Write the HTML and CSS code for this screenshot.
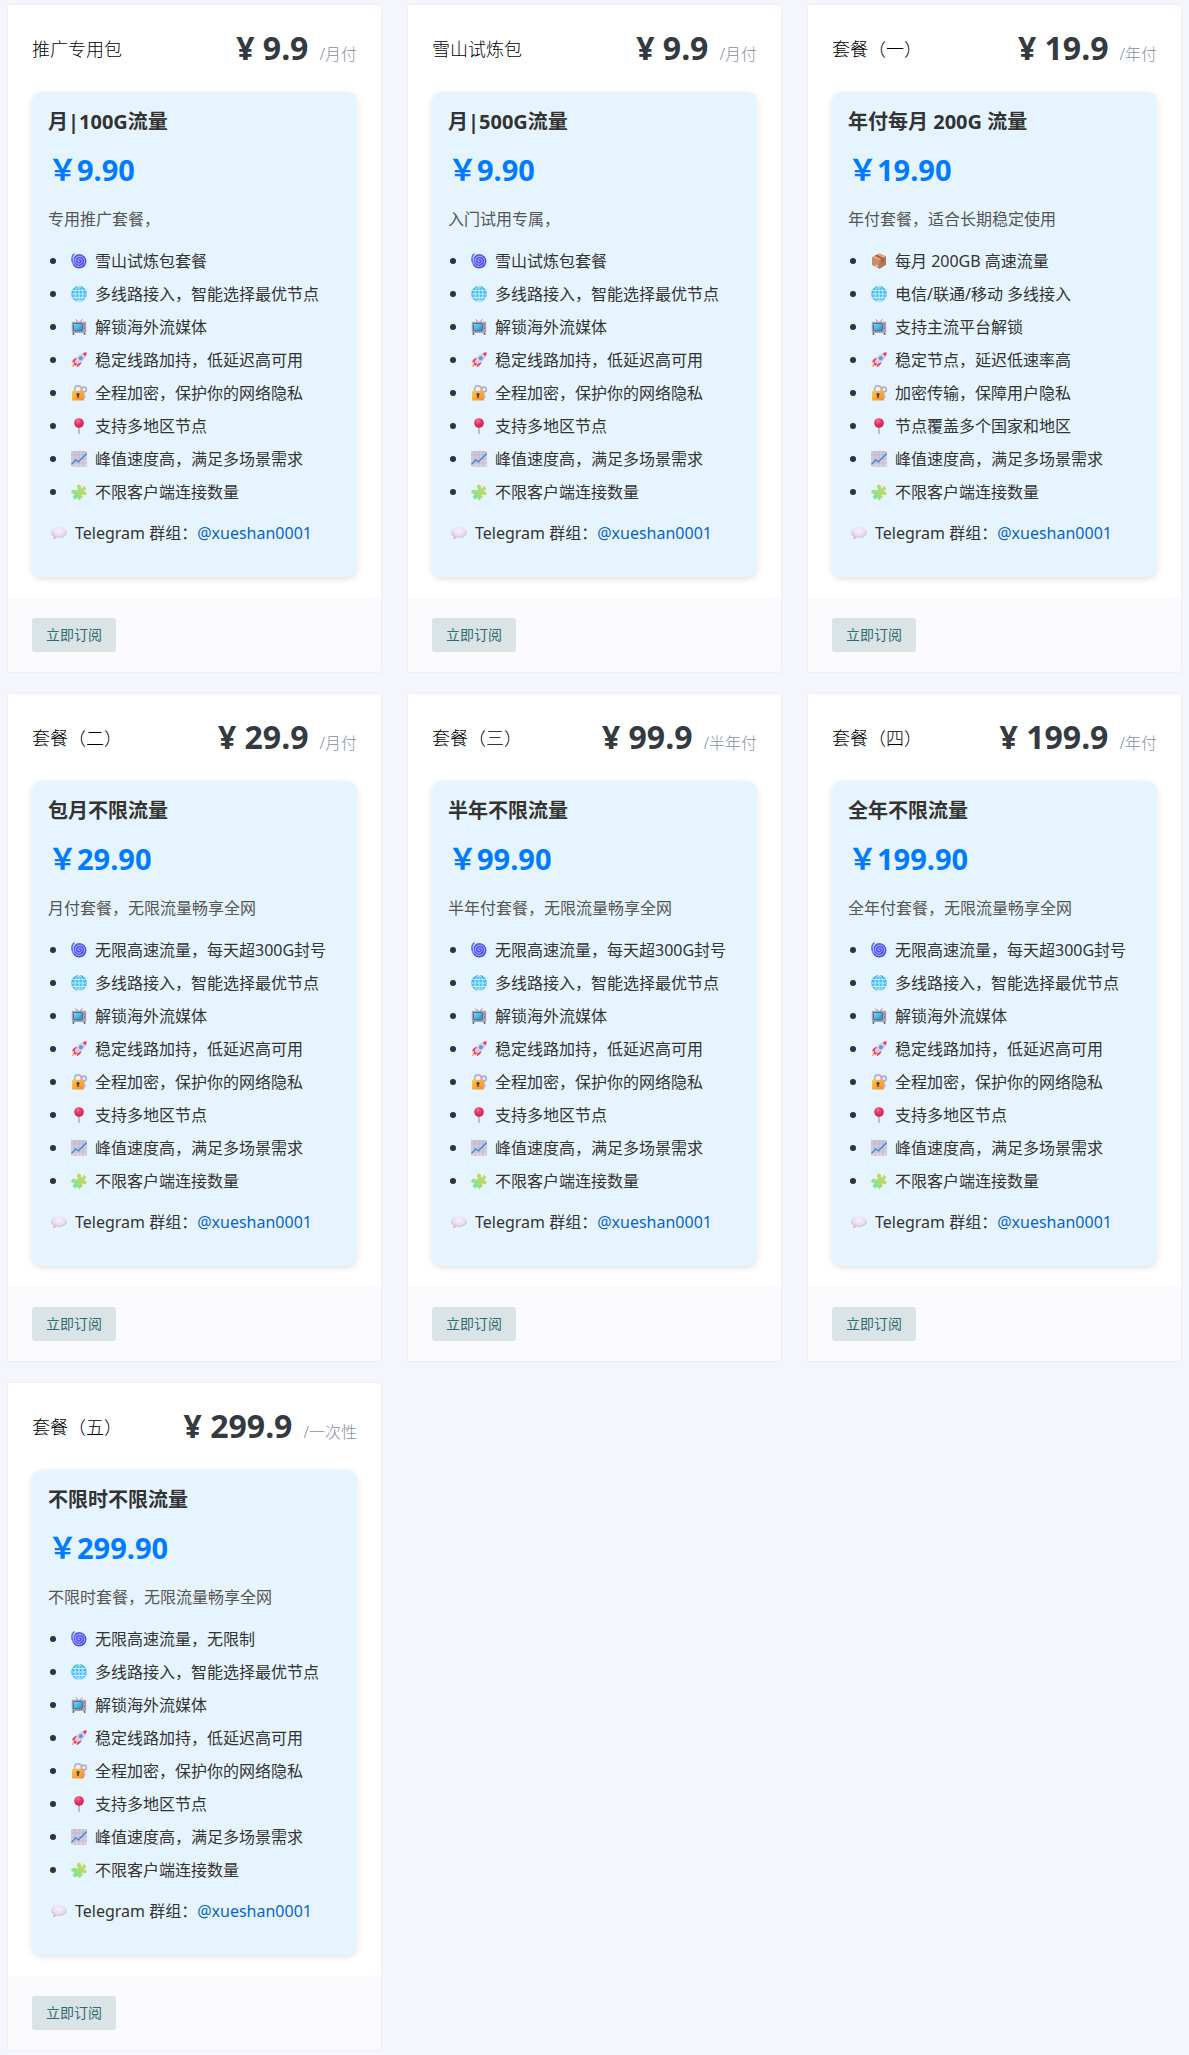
FILE: index.html
```
<!DOCTYPE html>
<html lang="zh-CN">
<head>
<meta charset="utf-8">
<meta name="viewport" content="width=device-width, initial-scale=1">
<title>套餐</title>
<link rel="stylesheet" href="styles.css">
</head>
<body>
<svg class="sprite" aria-hidden="true">
  <defs>
    <linearGradient id="g-spiral" x1="0" y1="0" x2="1" y2="1"><stop offset="0" stop-color="#5a6cff"/><stop offset="1" stop-color="#4a3be6"/></linearGradient>
    <linearGradient id="g-globe" x1="0" y1="0" x2="0" y2="1"><stop offset="0" stop-color="#35b4f2"/><stop offset="1" stop-color="#62c8f8"/></linearGradient>
    <linearGradient id="g-screen" x1="0" y1="0" x2="1" y2="1"><stop offset="0" stop-color="#6fe0ff"/><stop offset="1" stop-color="#1f90d0"/></linearGradient>
    <linearGradient id="g-lock" x1="0" y1="0" x2="1" y2="1"><stop offset="0" stop-color="#ffc83a"/><stop offset="1" stop-color="#f78a35"/></linearGradient>
    <radialGradient id="g-pin" cx=".4" cy=".3" r=".7"><stop offset="0" stop-color="#ff7a9c"/><stop offset=".4" stop-color="#f0386b"/><stop offset="1" stop-color="#cf1c50"/></radialGradient>
    <linearGradient id="g-chart" x1="0" y1="0" x2="0" y2="1"><stop offset="0" stop-color="#cdc5dc"/><stop offset="1" stop-color="#ddd3e6"/></linearGradient>
    <linearGradient id="g-puzzle" x1="1" y1="0" x2="0" y2="1"><stop offset="0" stop-color="#d8d850"/><stop offset="1" stop-color="#6fe79a"/></linearGradient>
    <radialGradient id="g-bubble" cx=".5" cy=".3" r=".7"><stop offset="0" stop-color="#f7f1fa"/><stop offset=".6" stop-color="#e6daf0"/><stop offset="1" stop-color="#bda6d6"/></radialGradient>
  </defs>
  <symbol id="i-spiral" viewBox="0 0 16 16">
    <circle cx="8.2" cy="8.3" r="7.2" fill="url(#g-spiral)"/>
    <path d="M1.2 9C.2 5 1.400 2 3.500.6" fill="none" stroke="#5a6cff" stroke-width="1.300"/>
    <path d="M3.400 3C1.500 6 2 11 5.600 12.800 9.500 14.700 14 12 13.500 7.500 13 3.800 9 2.400 6.300 4 3.700 5.600 3.800 9.400 6.300 10.700 8.800 12 11.400 10 11 7.600 10.600 5.400 7.800 5.200 7 7c-.5 1.300.8 2.200 1.700 1.600" fill="none" stroke="#cfd4ff" stroke-width=".8" stroke-linecap="round"/>
  </symbol>
  <symbol id="i-globe" viewBox="0 0 16 16">
    <circle cx="8" cy="8" r="7.900" fill="url(#g-globe)"/>
    <g fill="none" stroke="#d3f1ff" stroke-width=".9"><path d="M8 .5v15M.5 8h15M1.500 4.500h13M1.500 11.500h13"/><ellipse cx="8" cy="8" rx="3.900" ry="7.500"/></g>
  </symbol>
  <symbol id="i-tv" viewBox="0 0 16 16">
    <path d="M4.500 .3l3 3.200M11.500 .3l-3 3.200" stroke="#8b8598" stroke-width=".9"/>
    <path d="M3 13l-.7 2.300M13 13l.7 2.300" stroke="#5f5870" stroke-width="1.500" stroke-linecap="round"/>
    <rect x=".8" y="2.800" width="14.400" height="11.200" rx="1.200" fill="#a99fb5"/>
    <rect x="2.500" y="4.500" width="8.800" height="7.300" rx=".8" fill="url(#g-screen)" stroke="#4c5870" stroke-width=".8"/>
    <circle cx="13.400" cy="6" r=".8" fill="#e5486c"/><circle cx="13.400" cy="9" r=".7" fill="#776d86"/>
  </symbol>
  <symbol id="i-rocket" viewBox="0 0 16 16">
    <path d="M3.500 10.200L.4 15.600l5.800-3z" fill="#ff9d3c"/>
    <path d="M6.500 5.500C3.800 5.600 1.800 7.500.8 10.400l4-1zM10.500 9.500c-.1 2.700-2 4.700-4.900 5.700l1-4z" fill="#f0386b"/>
    <path d="M3.600 10.200C5 5.800 8.300 1.800 13 1l2 2c-.8 4.700-4.800 8-9.200 9.400z" fill="#d8cde3"/>
    <path d="M11.600 1.400C13 .7 14.800.3 15.700.3c0 .9-.4 2.700-1.100 4.100z" fill="#ef3566"/>
    <path d="M3.300 9.800l2.900 2.900-1.700.8-2-2z" fill="#e33467"/>
    <circle cx="9.800" cy="6.200" r="1.700" fill="#32a5e3" stroke="#8f86a5" stroke-width=".6"/>
  </symbol>
  <symbol id="i-lock" viewBox="0 0 16 16">
    <circle cx="13" cy="4.500" r="2.400" fill="none" stroke="#b6a9c8" stroke-width="1.600"/>
    <path d="M13 7v7M13 11.500h2" stroke="#c5b9d3" stroke-width="1.700"/>
    <path d="M3.700 7V4.200a3.300 3.300 0 0 1 6.600 0V7" fill="none" stroke="#b8aec5" stroke-width="1.600"/>
    <rect x="1" y="5.800" width="11.800" height="9.800" rx="1.200" fill="url(#g-lock)"/>
    <path d="M7 8a1.500 1.500 0 0 1 .8 2.800V13H6.200v-2.200A1.500 1.500 0 0 1 7 8z" fill="#493b4b"/>
  </symbol>
  <symbol id="i-pin" viewBox="0 0 16 16">
    <path d="M7.400 8h1.200v7.500a.6.6 0 0 1-1.200 0z" fill="#9e94ab"/><circle cx="8" cy="5" r="4.800" fill="url(#g-pin)"/>
  </symbol>
  <symbol id="i-chart" viewBox="0 0 16 16">
    <rect width="16" height="16" rx="1" fill="url(#g-chart)"/>
    <path d="M4 0v16M8 0v16M12 0v16M0 4h16M0 8h16M0 12h16" stroke="#b8aecb" stroke-width=".6"/>
    <path d="M.5 13.500L4.500 9l3 1.800L15.700 2.500" fill="none" stroke="#3c8fd2" stroke-width="1.400"/>
  </symbol>
  <symbol id="i-puzzle" viewBox="0 0 16 16">
    <g fill="url(#g-puzzle)">
      <path d="M3.200 5.800l3 .6c.8.100 1-.7.500-1.300C5.300 3.200 6 .6 8 .5c1.700 0 2.400 1.700 1.900 3.200-.2.800.4 1.200 1 .7L12.800 1.800l2.800 2.700-2.400 2.200c-.5.600-.2 1.200.5 1.100 1.500-.2 2 1 1.700 2.100-.4 1.500-2.400 1.600-3.600.8-.8-.4-1.300.1-1 .8l1.400 1.400-2 1.300c-.7.500-.6.700-.9 1.300-.6.900-1.700.7-1.900-.3-.2-1.200-.9-1.700-1.600-1L3.900 15.500 1.500 13l1.600-2c.5-.7.100-1.300-.7-1.200C.8 10 .1 9 .3 7.700c.2-1.300 1.400-1.700 2.900-1.900z"/>
    </g>
  </symbol>
  <symbol id="i-box" viewBox="0 0 16 16">
    <path d="M1 4.200L8.600.4 15 3.600v8.200L8.300 15.800 1 12z" fill="#c98c68"/>
    <path d="M1 4.200L8.600.4 15 3.600 8.300 7.600z" fill="#dfa576"/><path d="M8.300 7.600L15 3.600v8.200l-6.700 4z" fill="#b3745b"/>
    <path d="M4 2.700l7 3.500v3.200l1.400-.8V5.200L5.800 1.800z" fill="#8d5a45"/><path d="M4.500 11.500l2 1v1.800l-2-1z" fill="#f3e2da"/>
  </symbol>
  <symbol id="i-bubble" viewBox="0 0 16 16">
    <path d="M8 2.200c4.500 0 7.900 2.200 7.900 5.300S12.500 12.800 8 12.800c-.9 0-1.700-.1-2.500-.2-.8.900-2 1.500-3.500 1.600.6-.7.900-1.600.8-2.600C1.100 10.600.1 9.200.1 7.500.1 4.400 3.500 2.200 8 2.200z" fill="url(#g-bubble)"/>
  </symbol>
</svg>

<main class="plans">
  <article class="card">
    <header class="card-head"><h2 class="name">推广专用包</h2><p class="price">¥ 9.9<span class="period">/月付</span></p></header>
    <section class="offer">
      <h3 class="offer-title">月|100G流量</h3>
      <p class="amount">￥9.90</p>
      <p class="desc">专用推广套餐，</p>
      <ul class="features">
        <li><svg class="icon"><use href="#i-spiral"/></svg>雪山试炼包套餐</li>
        <li><svg class="icon"><use href="#i-globe"/></svg>多线路接入，智能选择最优节点</li>
        <li><svg class="icon"><use href="#i-tv"/></svg>解锁海外流媒体</li>
        <li><svg class="icon"><use href="#i-rocket"/></svg>稳定线路加持，低延迟高可用</li>
        <li><svg class="icon"><use href="#i-lock"/></svg>全程加密，保护你的网络隐私</li>
        <li><svg class="icon"><use href="#i-pin"/></svg>支持多地区节点</li>
        <li><svg class="icon"><use href="#i-chart"/></svg>峰值速度高，满足多场景需求</li>
        <li><svg class="icon"><use href="#i-puzzle"/></svg>不限客户端连接数量</li>
      </ul>
      <p class="contact"><svg class="icon"><use href="#i-bubble"/></svg><span>Telegram 群组：<a href="#telegram">@xueshan0001</a></span></p>
    </section>
    <footer class="card-foot"><button class="subscribe" type="button">立即订阅</button></footer>
  </article>

  <article class="card">
    <header class="card-head"><h2 class="name">雪山试炼包</h2><p class="price">¥ 9.9<span class="period">/月付</span></p></header>
    <section class="offer">
      <h3 class="offer-title">月|500G流量</h3>
      <p class="amount">￥9.90</p>
      <p class="desc">入门试用专属，</p>
      <ul class="features">
        <li><svg class="icon"><use href="#i-spiral"/></svg>雪山试炼包套餐</li>
        <li><svg class="icon"><use href="#i-globe"/></svg>多线路接入，智能选择最优节点</li>
        <li><svg class="icon"><use href="#i-tv"/></svg>解锁海外流媒体</li>
        <li><svg class="icon"><use href="#i-rocket"/></svg>稳定线路加持，低延迟高可用</li>
        <li><svg class="icon"><use href="#i-lock"/></svg>全程加密，保护你的网络隐私</li>
        <li><svg class="icon"><use href="#i-pin"/></svg>支持多地区节点</li>
        <li><svg class="icon"><use href="#i-chart"/></svg>峰值速度高，满足多场景需求</li>
        <li><svg class="icon"><use href="#i-puzzle"/></svg>不限客户端连接数量</li>
      </ul>
      <p class="contact"><svg class="icon"><use href="#i-bubble"/></svg><span>Telegram 群组：<a href="#telegram">@xueshan0001</a></span></p>
    </section>
    <footer class="card-foot"><button class="subscribe" type="button">立即订阅</button></footer>
  </article>

  <article class="card">
    <header class="card-head"><h2 class="name">套餐（一）</h2><p class="price">¥ 19.9<span class="period">/年付</span></p></header>
    <section class="offer">
      <h3 class="offer-title">年付每月 200G 流量</h3>
      <p class="amount">￥19.90</p>
      <p class="desc">年付套餐，适合长期稳定使用</p>
      <ul class="features">
        <li><svg class="icon"><use href="#i-box"/></svg>每月 200GB 高速流量</li>
        <li><svg class="icon"><use href="#i-globe"/></svg>电信/联通/移动 多线接入</li>
        <li><svg class="icon"><use href="#i-tv"/></svg>支持主流平台解锁</li>
        <li><svg class="icon"><use href="#i-rocket"/></svg>稳定节点，延迟低速率高</li>
        <li><svg class="icon"><use href="#i-lock"/></svg>加密传输，保障用户隐私</li>
        <li><svg class="icon"><use href="#i-pin"/></svg>节点覆盖多个国家和地区</li>
        <li><svg class="icon"><use href="#i-chart"/></svg>峰值速度高，满足多场景需求</li>
        <li><svg class="icon"><use href="#i-puzzle"/></svg>不限客户端连接数量</li>
      </ul>
      <p class="contact"><svg class="icon"><use href="#i-bubble"/></svg><span>Telegram 群组：<a href="#telegram">@xueshan0001</a></span></p>
    </section>
    <footer class="card-foot"><button class="subscribe" type="button">立即订阅</button></footer>
  </article>

  <article class="card">
    <header class="card-head"><h2 class="name">套餐（二）</h2><p class="price">¥ 29.9<span class="period">/月付</span></p></header>
    <section class="offer">
      <h3 class="offer-title">包月不限流量</h3>
      <p class="amount">￥29.90</p>
      <p class="desc">月付套餐，无限流量畅享全网</p>
      <ul class="features">
        <li><svg class="icon"><use href="#i-spiral"/></svg>无限高速流量，每天超300G封号</li>
        <li><svg class="icon"><use href="#i-globe"/></svg>多线路接入，智能选择最优节点</li>
        <li><svg class="icon"><use href="#i-tv"/></svg>解锁海外流媒体</li>
        <li><svg class="icon"><use href="#i-rocket"/></svg>稳定线路加持，低延迟高可用</li>
        <li><svg class="icon"><use href="#i-lock"/></svg>全程加密，保护你的网络隐私</li>
        <li><svg class="icon"><use href="#i-pin"/></svg>支持多地区节点</li>
        <li><svg class="icon"><use href="#i-chart"/></svg>峰值速度高，满足多场景需求</li>
        <li><svg class="icon"><use href="#i-puzzle"/></svg>不限客户端连接数量</li>
      </ul>
      <p class="contact"><svg class="icon"><use href="#i-bubble"/></svg><span>Telegram 群组：<a href="#telegram">@xueshan0001</a></span></p>
    </section>
    <footer class="card-foot"><button class="subscribe" type="button">立即订阅</button></footer>
  </article>

  <article class="card">
    <header class="card-head"><h2 class="name">套餐（三）</h2><p class="price">¥ 99.9<span class="period">/半年付</span></p></header>
    <section class="offer">
      <h3 class="offer-title">半年不限流量</h3>
      <p class="amount">￥99.90</p>
      <p class="desc">半年付套餐，无限流量畅享全网</p>
      <ul class="features">
        <li><svg class="icon"><use href="#i-spiral"/></svg>无限高速流量，每天超300G封号</li>
        <li><svg class="icon"><use href="#i-globe"/></svg>多线路接入，智能选择最优节点</li>
        <li><svg class="icon"><use href="#i-tv"/></svg>解锁海外流媒体</li>
        <li><svg class="icon"><use href="#i-rocket"/></svg>稳定线路加持，低延迟高可用</li>
        <li><svg class="icon"><use href="#i-lock"/></svg>全程加密，保护你的网络隐私</li>
        <li><svg class="icon"><use href="#i-pin"/></svg>支持多地区节点</li>
        <li><svg class="icon"><use href="#i-chart"/></svg>峰值速度高，满足多场景需求</li>
        <li><svg class="icon"><use href="#i-puzzle"/></svg>不限客户端连接数量</li>
      </ul>
      <p class="contact"><svg class="icon"><use href="#i-bubble"/></svg><span>Telegram 群组：<a href="#telegram">@xueshan0001</a></span></p>
    </section>
    <footer class="card-foot"><button class="subscribe" type="button">立即订阅</button></footer>
  </article>

  <article class="card">
    <header class="card-head"><h2 class="name">套餐（四）</h2><p class="price">¥ 199.9<span class="period">/年付</span></p></header>
    <section class="offer">
      <h3 class="offer-title">全年不限流量</h3>
      <p class="amount">￥199.90</p>
      <p class="desc">全年付套餐，无限流量畅享全网</p>
      <ul class="features">
        <li><svg class="icon"><use href="#i-spiral"/></svg>无限高速流量，每天超300G封号</li>
        <li><svg class="icon"><use href="#i-globe"/></svg>多线路接入，智能选择最优节点</li>
        <li><svg class="icon"><use href="#i-tv"/></svg>解锁海外流媒体</li>
        <li><svg class="icon"><use href="#i-rocket"/></svg>稳定线路加持，低延迟高可用</li>
        <li><svg class="icon"><use href="#i-lock"/></svg>全程加密，保护你的网络隐私</li>
        <li><svg class="icon"><use href="#i-pin"/></svg>支持多地区节点</li>
        <li><svg class="icon"><use href="#i-chart"/></svg>峰值速度高，满足多场景需求</li>
        <li><svg class="icon"><use href="#i-puzzle"/></svg>不限客户端连接数量</li>
      </ul>
      <p class="contact"><svg class="icon"><use href="#i-bubble"/></svg><span>Telegram 群组：<a href="#telegram">@xueshan0001</a></span></p>
    </section>
    <footer class="card-foot"><button class="subscribe" type="button">立即订阅</button></footer>
  </article>

  <article class="card">
    <header class="card-head"><h2 class="name">套餐（五）</h2><p class="price">¥ 299.9<span class="period">/一次性</span></p></header>
    <section class="offer">
      <h3 class="offer-title">不限时不限流量</h3>
      <p class="amount">￥299.90</p>
      <p class="desc">不限时套餐，无限流量畅享全网</p>
      <ul class="features">
        <li><svg class="icon"><use href="#i-spiral"/></svg>无限高速流量，无限制</li>
        <li><svg class="icon"><use href="#i-globe"/></svg>多线路接入，智能选择最优节点</li>
        <li><svg class="icon"><use href="#i-tv"/></svg>解锁海外流媒体</li>
        <li><svg class="icon"><use href="#i-rocket"/></svg>稳定线路加持，低延迟高可用</li>
        <li><svg class="icon"><use href="#i-lock"/></svg>全程加密，保护你的网络隐私</li>
        <li><svg class="icon"><use href="#i-pin"/></svg>支持多地区节点</li>
        <li><svg class="icon"><use href="#i-chart"/></svg>峰值速度高，满足多场景需求</li>
        <li><svg class="icon"><use href="#i-puzzle"/></svg>不限客户端连接数量</li>
      </ul>
      <p class="contact"><svg class="icon"><use href="#i-bubble"/></svg><span>Telegram 群组：<a href="#telegram">@xueshan0001</a></span></p>
    </section>
    <footer class="card-foot"><button class="subscribe" type="button">立即订阅</button></footer>
  </article>
</main>
</body>
</html>
```
FILE: styles.css
```
* { box-sizing: border-box; }

body {
  margin: 0;
  background: #f5f6fc;
  color: #333;
  font: 16px/26px "Noto Sans", "Noto Sans CJK SC", sans-serif;
}

h2, h3, p, ul { margin: 0; padding: 0; }

.sprite { position: absolute; width: 0; height: 0; }

.plans {
  display: grid;
  grid-template-columns: repeat(3, minmax(0, 1fr));
  gap: 22px 27px;
  padding: 5px 8px 6px;
}

.card {
  background: #fff;
  border-radius: 2px;
  box-shadow: 0 0 2px rgba(40, 40, 80, .12);
}

.card-head {
  display: flex;
  align-items: center;
  justify-content: space-between;
  height: 87px;
  padding: 0 24px;
}

.name {
  color: #000;
  font-size: 18px;
  font-weight: 300;
}

.price {
  display: flex;
  align-items: baseline;
  gap: 11px;
  padding-top: 4px;
  color: #343a40;
  font-size: 32px;
  font-weight: 700;
  line-height: 40px;
  white-space: nowrap;
}

.period {
  color: #868ea3;
  font-size: 16px;
  font-weight: 300;
}

.offer {
  margin: 0 24px 21px;
  padding: 16px;
  border-radius: 10px;
  background: #e6f4ff;
  box-shadow: 0 2px 6px rgba(0, 0, 0, .12);
}

.offer-title {
  font-size: 20px;
  font-weight: 700;
  line-height: 28px;
}

.amount {
  margin: 13px 0 15px;
  color: #007bff;
  font-size: 29px;
  font-weight: 700;
  line-height: 42px;
}

.desc { color: #555; }

.features {
  margin: 12px 0;
  list-style: none;
}

.features li {
  display: flex;
  align-items: center;
  height: 33px;
  white-space: nowrap;
}

.features li::before {
  content: "";
  width: 6px;
  height: 6px;
  margin: 0 15px 0 2px;
  border-radius: 50%;
  background: #333;
}

.icon {
  flex: none;
  width: 16px;
  height: 16px;
  margin-right: 8px;
}

.contact {
  display: flex;
  align-items: center;
  margin-bottom: 15px;
  padding-left: 3px;
  white-space: nowrap;
}

.contact a { color: #0665d0; text-decoration: none; }

.card-foot {
  display: flex;
  padding: 20px 24px;
  border-radius: 0 0 2px 2px;
  background: #fafafc;
}

.subscribe {
  height: 34px;
  padding: 0 14px;
  border: 0;
  border-radius: 3px;
  background: #dae3e5;
  color: #306b72;
  font: inherit;
  font-size: 14px;
}
```
